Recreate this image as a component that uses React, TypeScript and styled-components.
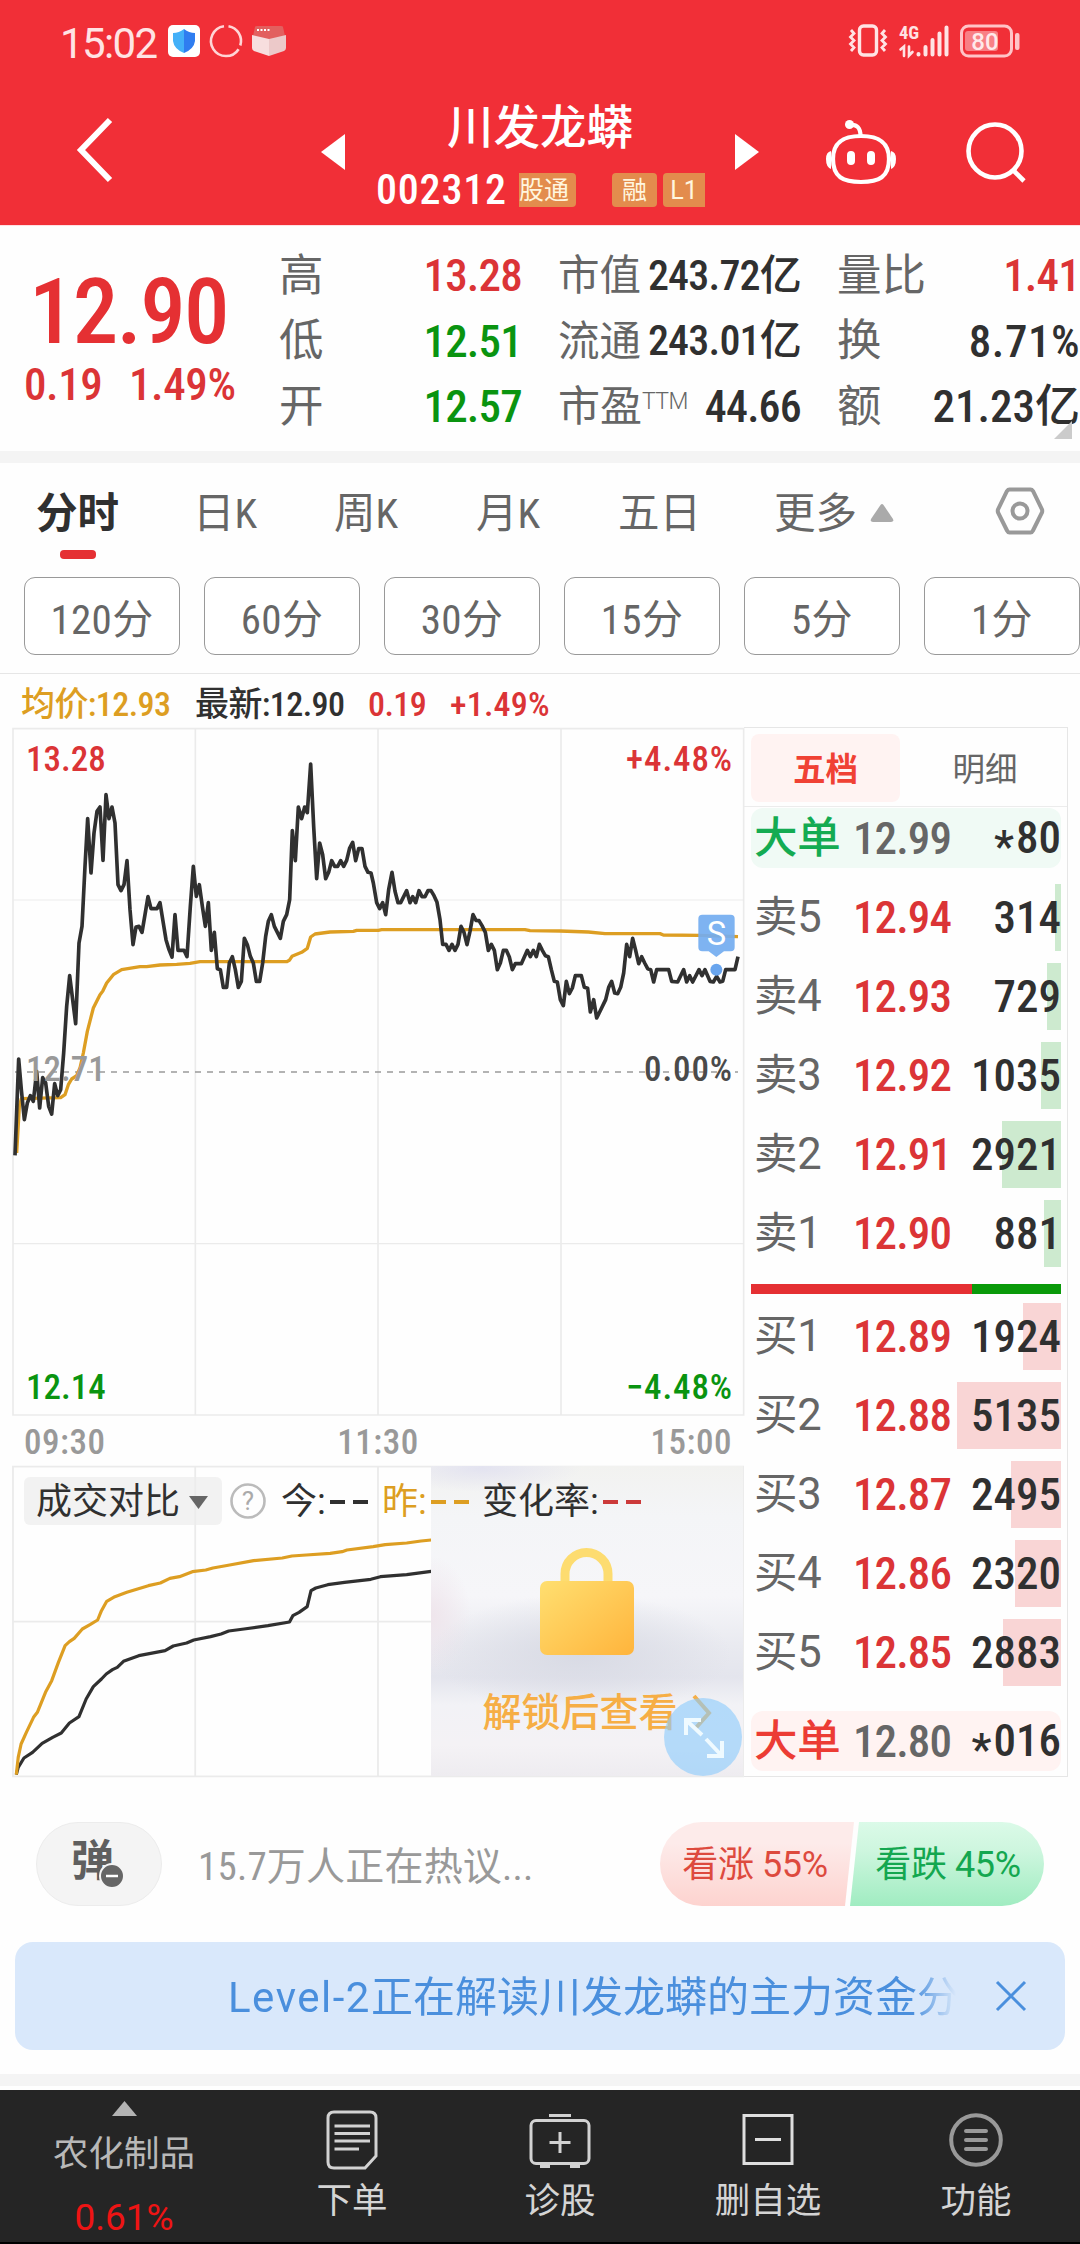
import React from 'react';
import styled, { createGlobalStyle, css } from 'styled-components';

const RED = '#db3436';
const GREEN = '#0a9410';
const INK = '#303030';
const GREY = '#666666';
const GOLD = '#dd9e22';

const num = css`
  font-family: 'Roboto Condensed', Roboto, 'Noto Sans CJK SC', sans-serif;
`;

const GlobalStyle = createGlobalStyle`
  * { box-sizing: border-box; }
  body {
    margin: 0;
    background: #fefefe;
    font-family: Roboto, 'Noto Sans CJK SC', sans-serif;
    color: ${INK};
  }
  svg { display: block; flex: none; overflow: visible; }
`;

const Screen = styled.main`
  width: 1080px;
  height: 2244px;
  overflow: hidden;
  display: flex;
  flex-direction: column;
  line-height: 1;
  white-space: nowrap;
`;

/* ---------- header ---------- */
const Header = styled.header`
  height: 225px;
  flex: none;
  background: #f12f37;
  color: #fff;
`;
const StatusBar = styled.div`
  height: 82px;
  padding: 0 60px 0 60px;
  display: flex;
  align-items: center;
`;
const Clock = styled.span`
  width: 108px;
  font-size: 42px;
  color: #ffe3e4;
  letter-spacing: -1.6px;
  padding-top: 5px;
`;
const StatusIcons = styled.div<{ $gap: number }>`
  display: flex;
  align-items: center;
  gap: ${p => p.$gap}px;
`;
const Spacer = styled.div`
  flex: 1;
`;
const TitleBar = styled.div`
  height: 140px;
  padding-left: 77px;
  display: flex;
  align-items: center;
`;
const IconButton = styled.div<{ $before: number }>`
  margin-left: ${p => p.$before}px;
`;
const TitleBlock = styled.div`
  width: 390px;
  height: 140px;
  padding-top: 23px;
`;
const StockName = styled.h1`
  margin: 0 0 22px;
  height: 46px;
  line-height: 46px;
  font-size: 46.5px;
  font-weight: 500;
  text-align: center;
`;
const CodeRow = styled.div`
  height: 34px;
  padding-left: 31px;
  display: flex;
  align-items: center;
`;
const Code = styled.span`
  ${num}
  width: 143px;
  font-size: 42px;
  font-weight: 500;
  letter-spacing: 0.8px;
`;
const Tag = styled.span<{ $w: number; $r: string; $after?: number; $align?: string }>`
  width: ${p => p.$w}px;
  height: 34px;
  line-height: 35px;
  margin-right: ${p => p.$after ?? 0}px;
  border-radius: ${p => p.$r};
  background: #e38c4d;
  color: #fff6df;
  font-size: 25px;
  text-align: ${p => p.$align ?? 'center'};
`;

/* ---------- quote summary ---------- */
const Quote = styled.section`
  position: relative;
  height: 226px;
  flex: none;
  display: flex;
  border-top: 1px solid #ffdfe2;
`;
const PriceBlock = styled.div`
  width: 279px;
  padding-top: 40px;
  ${num}
  color: ${RED};
`;
const BigPrice = styled.div`
  height: 92px;
  line-height: 92px;
  padding-left: 29px;
  font-size: 91px;
  font-weight: 500;
  letter-spacing: -1.7px;
  color: #e53033;
`;
const ChangeRow = styled.div`
  margin-top: 4px;
  height: 46px;
  line-height: 46px;
  display: flex;
  padding-left: 24px;
  font-size: 45px;
  font-weight: 500;
`;
const Change = styled.span<{ $w?: number }>`
  width: ${p => (p.$w ? p.$w + 'px' : 'auto')};
  letter-spacing: -0.4px;
`;
const Stats = styled.div`
  padding-top: 17px;
  display: grid;
  grid-template-columns: repeat(3, 243px);
  grid-template-rows: repeat(3, 65.5px);
  column-gap: 36px;
`;
const Stat = styled.div`
  display: flex;
  align-items: center;
  justify-content: space-between;
`;
const StatLabel = styled.span<{ $size: number }>`
  display: flex;
  font-size: ${p => p.$size}px;
  color: ${GREY};
`;
const Sup = styled.sup`
  font-size: 23px;
  line-height: 23px;
  font-weight: 300;
  vertical-align: baseline;
  padding-top: 4px;
  letter-spacing: -0.6px;
`;
const StatValue = styled.span<{ $size: number; $color: string; $ls?: number }>`
  ${num}
  font-size: ${p => p.$size}px;
  font-weight: 500;
  letter-spacing: ${p => p.$ls ?? -0.8}px;
  color: ${p => p.$color};
`;
const Corner = styled.i`
  position: absolute;
  right: 8px;
  bottom: 12px;
  border-style: solid;
  border-width: 0 0 18px 18px;
  border-color: transparent transparent #cbcbcb transparent;
`;
const Band = styled.div<{ $after?: number }>`
  height: 12px;
  flex: none;
  margin-bottom: ${p => p.$after ?? 0}px;
  background: #f4f4f4;
`;

/* ---------- period tabs ---------- */
const Tabs = styled.nav`
  height: 114px;
  flex: none;
  display: flex;
  align-items: flex-start;
  padding-top: 24px;
`;
const Tab = styled.div<{ $w: number; $active?: boolean; $before?: number }>`
  ${num}
  width: ${p => p.$w}px;
  margin-left: ${p => p.$before ?? 0}px;
  padding-top: 6px;
  display: flex;
  flex-direction: column;
  font-size: 41.5px;
  line-height: 42px;
  font-weight: ${p => (p.$active ? 700 : 400)};
  color: ${p => (p.$active ? INK : GREY)};
`;
const Underline = styled.i`
  width: 36px;
  height: 9px;
  margin: 15px 0 0 24px;
  border-radius: 4px;
  background: #e53033;
`;
const MoreLabel = styled.span`
  display: flex;
  align-items: center;
  gap: 13px;
`;
const Periods = styled.div`
  height: 97px;
  flex: none;
  display: flex;
  gap: 24px;
  padding-left: 24px;
  border-bottom: 1.5px solid #e6e6e6;
`;
const Period = styled.button`
  ${num}
  width: 156px;
  height: 78px;
  flex: none;
  padding: 0 0 1px;
  border: 1.5px solid #999;
  border-radius: 11px;
  background: #fff;
  color: ${GREY};
  font-size: 41px;
  letter-spacing: 0.3px;
`;

/* ---------- chart area ---------- */
const Legend = styled.div`
  ${num}
  height: 53px;
  flex: none;
  display: flex;
  align-items: center;
  padding: 7px 0 0 21px;
  font-size: 34px;
  font-weight: 500;
`;
const LegendItem = styled.span<{ $w: number; $color: string; $ls?: number }>`
  width: ${p => p.$w}px;
  color: ${p => p.$color};
  letter-spacing: ${p => p.$ls ?? -0.6}px;
`;
const Board = styled.section`
  height: 1050px;
  flex: none;
  display: flex;
  padding-left: 12px;
`;
const Charts = styled.div`
  width: 732px;
  padding-top: 1px;
`;
const PriceChart = styled.div`
  position: relative;
  height: 688px;
`;
const ChartLabel = styled.span<{ $color: string; $top: number; $right?: boolean }>`
  ${num}
  position: absolute;
  top: ${p => p.$top}px;
  ${p => (p.$right ? 'right: 11px; letter-spacing: 0.9px;' : 'left: 14px;')}
  font-size: 35px;
  font-weight: 500;
  color: ${p => p.$color};
`;
const Times = styled.div`
  ${num}
  height: 50px;
  display: flex;
  align-items: center;
  justify-content: space-between;
  padding: 2px 12px 0 12px;
  font-size: 35px;
  font-weight: 500;
  letter-spacing: 0.5px;
  color: #999;
`;
const CompareChart = styled.div`
  position: relative;
  height: 311px;
`;
const Locked = styled.div`
  position: absolute;
  top: 0;
  right: 1px;
  width: 312px;
  height: 310px;
  padding-top: 82px;
  display: flex;
  flex-direction: column;
  align-items: center;
  background:
    radial-gradient(ellipse 100px 24px at 50px 2px, #e3e3f0 0%, rgba(227, 227, 240, 0) 100%),
    radial-gradient(ellipse 150px 60px at 150px 188px, #d8dae4 0%, rgba(216, 218, 228, 0) 100%),
    radial-gradient(ellipse 40px 60px at 0 150px, #efe5ec 0%, rgba(239, 229, 236, 0) 100%),
    linear-gradient(#f2f2f0 0, #f4f5f7 16%, #f6f6f9 42%, #e9eaf0 58%, #e4e5ed 68%, #f2f2f6 77%, #f4f2f5 90%, #eeecf0 100%);
`;
const Unlock = styled.div`
  margin: 38px 0 0 20px;
  display: flex;
  align-items: center;
  gap: 14px;
  font-size: 39px;
  font-weight: 500;
  color: #f6ae45;
`;
const CompareBar = styled.div`
  ${num}
  position: absolute;
  left: 12px;
  top: 11px;
  height: 48px;
  display: flex;
  align-items: center;
  font-size: 36px;
`;
const Selector = styled.div`
  width: 198px;
  height: 48px;
  margin-right: 8px;
  padding: 2px 0 0 12px;
  display: flex;
  align-items: center;
  gap: 9px;
  border-radius: 6px;
  background: rgba(236, 236, 236, 0.7);
`;
const CompareItem = styled.span<{ $w: number; $color?: string; $before?: number }>`
  width: ${p => p.$w}px;
  margin-left: ${p => p.$before ?? 0}px;
  padding-top: 2px;
  display: flex;
  align-items: center;
  color: ${p => p.$color ?? INK};
`;
const Dashes = styled.i<{ $color: string }>`
  width: 38px;
  height: 4px;
  margin: 0 0 0 5px;
  background: linear-gradient(90deg, ${p => p.$color} 15px, transparent 15px, transparent 23px, ${p => p.$color} 23px);
`;
const Expand = styled.div`
  position: absolute;
  right: 2px;
  bottom: 1px;
`;

/* ---------- order book ---------- */
const Book = styled.aside`
  width: 324px;
  border: 1px solid #e6e6e6;
  border-width: 1.5px 1.5px 1.5px 0;
  padding: 0 6px 0 7px;
`;
const BookTabs = styled.div`
  height: 79px;
  margin: 0 -6px 1px -7px;
  padding: 6px 0 0 7px;
  display: flex;
  border-bottom: 1.5px solid #ececec;
`;
const BookTab = styled.div<{ $active?: boolean }>`
  width: ${p => (p.$active ? 149 : 170)}px;
  flex: none;
  height: 68px;
  line-height: 72px;
  border-radius: 8px;
  text-align: center;
  font-size: 32.5px;
  font-weight: ${p => (p.$active ? 700 : 400)};
  color: ${p => (p.$active ? '#f04134' : GREY)};
  background: ${p => (p.$active ? '#fff3f2' : 'transparent')};
`;
const Row = styled.div<{ $bg?: string; $bar?: number; $barColor?: string; $h: number; $after: number }>`
  height: ${p => p.$h}px;
  margin-bottom: ${p => p.$after}px;
  display: grid;
  grid-template-columns: 99px 97px 1fr;
  align-items: center;
  padding-left: 3px;
  border-radius: ${p => (p.$bg ? 12 : 0)}px;
  background: ${p => p.$bg ?? `linear-gradient(${p.$barColor}, ${p.$barColor}) right / ${p.$bar}px 100% no-repeat`};
`;
const Level = styled.span<{ $color?: string }>`
  font-size: 43.5px;
  letter-spacing: -0.3px;
  padding-top: 1px;
  font-weight: ${p => (p.$color ? 500 : 400)};
  color: ${p => p.$color ?? GREY};
`;
const Price = styled.span<{ $color: string }>`
  ${num}
  font-size: 45px;
  font-weight: 500;
  letter-spacing: -0.9px;
  color: ${p => p.$color};
`;
const Volume = styled.span`
  ${num}
  font-size: 45px;
  font-weight: 500;
  text-align: right;
`;
const Star = styled.span`
  display: inline-block;
  line-height: 30px;
  vertical-align: -9px;
  margin-right: 2px;
`;
const Ratio = styled.div`
  height: 10px;
  margin: 17px 0 9px;
  background: linear-gradient(90deg, #e53033 221px, #0a9a0a 221px);
`;

/* ---------- discussion ---------- */
const Discuss = styled.section`
  height: 165px;
  flex: none;
  padding: 45px 36px 0;
  display: flex;
`;
const Barrage = styled.div`
  position: relative;
  width: 126px;
  height: 84px;
  flex: none;
  line-height: 77px;
  padding-left: 34px;
  border: 1px solid #ececec;
  border-radius: 42px;
  background: #f4f4f4;
  font-size: 43px;
  font-weight: 700;
  color: #5f5f5f;
`;
const BarrageBadge = styled.div`
  position: absolute;
  left: 62px;
  top: 40px;
`;
const Topic = styled.span`
  ${num}
  flex: 0 0 498px;
  padding-left: 36px;
  line-height: 90px;
  font-size: 39px;
  letter-spacing: 0.2px;
  color: #999;
`;
const Vote = styled.div<{ $up?: boolean }>`
  width: 194px;
  flex: none;
  height: 84px;
  line-height: 86px;
  text-align: center;
  margin-left: ${p => (p.$up ? 0 : -4)}px;
  padding-right: ${p => (p.$up ? 4 : 0)}px;
  padding-left: ${p => (p.$up ? 0 : 2)}px;
  font-size: 36px;
  letter-spacing: -0.4px;
  color: ${p => (p.$up ? '#dd4a3e' : '#14a750')};
  border-radius: ${p => (p.$up ? '42px 0 0 42px' : '0 42px 42px 0')};
  background: ${p => (p.$up ? 'linear-gradient(#fdebea, #fdebea 25%, #fdd3cf)' : 'linear-gradient(#dbfae8, #cdf6de 35%, #a0ecc1)')};
  clip-path: ${p => (p.$up ? 'polygon(0 0, 100% 0, 185px 100%, 0 100%)' : 'polygon(9px 0, 100% 0, 100% 100%, 0 100%)')};
`;
const Banner = styled.section`
  height: 108px;
  flex: none;
  margin: 0 15px 24px;
  padding-left: 213px;
  display: flex;
  align-items: center;
  border-radius: 18px;
  background: #d9e8fb;
  color: #4a8fdd;
`;
const BannerText = styled.span`
  width: 728px;
  margin-right: 40px;
  padding-top: 3px;
  overflow: hidden;
  line-height: 60px;
  font-size: 42px;
  mask-image: linear-gradient(90deg, #000 685px, transparent 728px);
`;
const Latin = styled.span`
  letter-spacing: 1.5px;
`;

/* ---------- bottom navigation ---------- */
const Nav = styled.nav`
  height: 154px;
  flex: none;
  display: grid;
  grid-template-columns: 248px repeat(4, 208px);
  background: #252525;
  border-bottom: 2px solid #000;
  color: #d4d4d4;
`;
const NavItem = styled.div`
  display: flex;
  flex-direction: column;
  align-items: center;
  padding-top: 20px;
  font-size: 35.5px;
`;
const NavIcon = styled.div`
  height: 74px;
`;
const Sector = styled.div`
  display: flex;
  flex-direction: column;
  align-items: center;
  padding-top: 11px;
  font-size: 35.5px;
  color: #b8b8b8;
`;
const SectorName = styled.span`
  margin-top: 21px;
`;
const SectorChange = styled.span`
  margin-top: 26px;
  font-size: 37px;
  color: #ee1414;
`;

/* ---------- data ---------- */
const PRICE =
  '45,1307 56,1018 64,1110 73,1200 82,1150 91,1128 100,1145 110,1055 119,1165 128,1074 137,1090 146,1160 155,1183 164,1092 173,1128 182,1110 191,1000 200,860 209,768 218,840 227,912 237,670 246,620 255,440 263,297 273,460 282,340 291,275 300,262 309,422 318,225 327,297 336,262 345,310 354,495 363,513 372,495 381,423 390,570 399,675 408,622 417,620 426,638 435,585 444,531 453,567 471,567 480,549 489,605 498,660 507,690 516,712 525,585 534,692 552,692 561,711 571,560 580,440 589,530 598,495 607,560 616,620 625,549 634,692 643,638 652,747 661,750 670,803 680,803 688,730 697,711 706,750 715,803 724,785 733,656 742,675 751,710 760,730 769,785 779,785 788,730 797,650 805,605 814,585 823,620 832,638 841,656 850,605 860,585 869,540 877,333 886,423 895,262 905,297 914,262 922,279 932,133 941,320 950,477 959,370 968,405 977,477 986,458 995,423 1004,440 1013,440 1022,423 1031,440 1040,422 1049,385 1058,368 1067,423 1076,387 1086,387 1095,440 1104,458 1113,460 1120,490 1130,549 1139,567 1148,549 1157,585 1166,510 1176,458 1185,515 1194,549 1202,549 1211,531 1220,513 1230,549 1238,531 1247,549 1257,513 1266,531 1275,531 1284,513 1293,513 1302,528 1311,548 1320,600 1328,674 1338,674 1347,692 1356,674 1365,692 1374,674 1383,620 1392,638 1401,675 1410,635 1419,585 1428,602 1437,603 1446,618 1456,638 1465,692 1474,674 1483,692 1492,750 1501,730 1510,692 1519,692 1528,712 1537,750 1546,732 1564,732 1573,712 1582,692 1591,711 1600,692 1609,711 1618,674 1627,692 1636,708 1645,711 1654,750 1663,785 1672,787 1681,840 1690,858 1699,785 1708,822 1717,805 1726,768 1744,768 1753,803 1763,806 1771,877 1781,840 1790,895 1799,877 1817,840 1826,803 1835,785 1844,820 1853,822 1862,803 1871,760 1880,674 1889,711 1898,656 1907,692 1916,732 1925,711 1934,730 1943,747 1952,750 1961,787 1970,750 2006,750 2015,785 2033,787 2042,768 2051,750 2060,787 2069,768 2078,787 2097,750 2106,768 2115,750 2130,785 2140,787 2150,770 2160,787 2168,785 2177,750 2205,750 2214,711';
const AVERAGE =
  '50,1300 58,1160 64,1137 182,1134 195,1125 205,1095 215,1078 230,1068 240,1045 250,1000 262,935 280,865 300,825 308,815 320,790 340,765 365,750 420,741 440,741 480,736 530,734 570,731 600,726 860,726 868,722 876,710 905,698 922,686 932,652 945,643 990,637 1060,635 1070,632 1135,632 1145,630 1575,630 1590,633 1680,634 1765,637 1815,642 1980,642 1990,646 2100,647 2214,651';
const YESTERDAY =
  '34,1272 38,1220 44,1180 55,1145 70,1100 78,1085 95,1025 108,990 122,935 136,885 145,873 155,863 172,835 188,822 204,808 212,780 223,752 240,738 265,725 310,705 335,697 355,683 375,678 402,663 430,658 445,652 480,643 530,630 590,622 610,616 640,613 690,608 715,603 725,598 780,588 805,582 850,577 880,571 901,568';
const TODAY =
  '34,1272 38,1250 50,1222 68,1205 88,1178 110,1160 128,1147 145,1117 165,1098 180,1045 195,1008 212,985 222,970 235,957 245,950 258,932 290,915 345,900 362,886 390,877 405,868 440,858 462,850 478,841 510,835 560,825 605,814 612,795 625,785 642,768 650,720 660,712 685,702 720,695 775,686 795,678 850,672 901,662';

const STATS: { label: string; sup?: string; value: string; color: string; ls: number; vs: number; sp?: number }[] = [
  { label: '高', value: '13.28', color: RED, ls: 44.5, vs: 45 },
  { label: '市值', value: '243.72亿', color: INK, ls: 41.5, vs: 42 },
  { label: '量比', value: '1.41', color: RED, ls: 44.5, vs: 45 },
  { label: '低', value: '12.51', color: GREEN, ls: 44.5, vs: 45 },
  { label: '流通', value: '243.01亿', color: INK, ls: 41.5, vs: 42 },
  { label: '换', value: '8.71%', color: INK, ls: 44.5, vs: 45, sp: 0.5 },
  { label: '开', value: '12.57', color: GREEN, ls: 44.5, vs: 45 },
  { label: '市盈', sup: 'TTM', value: '44.66', color: INK, ls: 42, vs: 44 },
  { label: '额', value: '21.23亿', color: INK, ls: 44.5, vs: 45, sp: 0 },
];
const ASKS: [string, string, string, number][] = [
  ['卖5', '12.94', '314', 6],
  ['卖4', '12.93', '729', 14],
  ['卖3', '12.92', '1035', 20],
  ['卖2', '12.91', '2921', 59],
  ['卖1', '12.90', '881', 17],
];
const BIDS: [string, string, string, number][] = [
  ['买1', '12.89', '1924', 38],
  ['买2', '12.88', '5135', 104],
  ['买3', '12.87', '2495', 50],
  ['买4', '12.86', '2320', 46],
  ['买5', '12.85', '2883', 58],
];

/* ---------- icons ---------- */
const ShieldIcon = () => (
  <svg width="32" height="32" viewBox="0 0 32 32">
    <rect width="32" height="32" rx="5" fill="#fff" />
    <path d="M16 4 Q21 8 27 8 V16 Q26 24 16 28 Z" fill="#2f7df0" />
    <path d="M16 4 Q11 8 5 8 V16 Q6 24 16 28 Z" fill="#43b0f8" />
  </svg>
);
const RingIcon = () => (
  <svg width="32" height="32" viewBox="0 0 32 32" fill="none" stroke="#ffd5d6" strokeWidth="2.6">
    <path d="M18.5 1.200 A15 15 0 0 1 30.300 20.500 M28.600 24.200 A15 15 0 1 1 14 1.200" />
  </svg>
);
const BoxIcon = () => (
  <svg width="34" height="32" viewBox="0 0 34 32">
    <path d="M3 2 Q3 1 5 1 H29 Q31 1 31 2 L33 11 L17 15 L1 11 Z" fill="#e2605f" />
    <path d="M0 10 L17 14 V31 L2 26 Q0 25 0 23 Z" fill="#f7dede" />
    <path d="M34 10 L17 14 V31 L32 26 Q34 25 34 23 Z" fill="#ecc9c9" />
    <path d="M5 5 h2 m1.5 0 h2 m1.5 0 h2 m1.5 0 h2" stroke="#fff" strokeWidth="2" />
  </svg>
);
const VibrateIcon = () => (
  <svg width="40" height="34" viewBox="0 0 40 34" fill="none" stroke="#ffe3e4" strokeWidth="3.4">
    <rect x="11.5" y="2" width="17" height="29" rx="4" />
    <path d="M3 6 L6 9.5 L2.5 13 L6 16.5 L2.5 20 L6 23.5 L3 27 M37 6 L34 9.5 L37.500 13 L34 16.500 L37.500 20 L34 23.500 L37 27" strokeWidth="2.8" />
  </svg>
);
const SignalIcon = () => (
  <svg width="50" height="34" viewBox="0 0 50 34">
    <text x="0" y="15" fontFamily="Roboto Condensed" fontSize="18.500" fontWeight="700" fill="#ffe3e4">4G</text>
    <g stroke="#ffe3e4" strokeWidth="4" strokeLinecap="round">
      <path d="M19.500 30 V30.500 M26.500 23 V30.500 M33.500 16 V30.500 M40.500 9.500 V30.500 M47.500 3.500 V30.500" />
      <path d="M1.500 25.500 L5 22.500 V32 M10 22.500 V31.500 L13.500 28" strokeWidth="2.600" fill="none" />
    </g>
  </svg>
);
const BatteryIcon = () => (
  <svg width="60" height="34" viewBox="0 0 60 34">
    <rect x="1.500" y="2" width="50" height="30" rx="7" fill="none" stroke="#ffc4c7" strokeWidth="3" />
    <rect x="5" y="7" width="33" height="20" rx="3" fill="#f88085" />
    <rect x="55" y="9" width="4.500" height="17" rx="2" fill="#ffc4c7" />
    <text x="25" y="25.500" textAnchor="middle" fontFamily="Roboto" fontSize="24" fontWeight="500" fill="#ffe9ea">80</text>
  </svg>
);
const BackIcon = () => (
  <svg width="35" height="66" viewBox="0 0 35 66" fill="none" stroke="#fff" strokeWidth="6">
    <path d="M33 1 L4 31 L33 61" />
  </svg>
);
const Triangle = ({ w, h, d, fill }: { w: number; h: number; d: string; fill: string }) => (
  <svg width={w} height={h} viewBox={`0 0 ${w} ${h}`}>
    <path d={d} fill={fill} />
  </svg>
);
const RobotIcon = () => (
  <svg width="70" height="64" viewBox="0 0 70 64" fill="none" stroke="#fff" strokeWidth="4.200">
    <path d="M35 16 C50 16 63 20 63 39 C63 57 53 62 35 62 C17 62 7 57 7 39 C7 20 20 16 35 16 Z" />
    <path d="M24 5 C31 4 34.500 8 34.500 16" />
    <circle cx="23.500" cy="4.500" r="4.500" fill="#fff" stroke="none" />
    <path d="M25 35 V41 M45 35 V41" strokeWidth="8" strokeLinecap="round" />
    <path d="M5 31 Q0 32 0 39 Q0 47 5 49 Z M65 31 Q70 32 70 39 Q70 47 65 49 Z" fill="#fff" stroke="none" />
  </svg>
);
const SearchIcon = () => (
  <svg width="62" height="64" viewBox="0 0 62 64" fill="none" stroke="#fff" strokeWidth="4.600">
    <circle cx="29" cy="31" r="26.500" />
    <path d="M47 50 L58 61" />
  </svg>
);
const SettingsIcon = () => (
  <svg width="50" height="48" viewBox="0 0 50 48" fill="none" stroke="#999" strokeWidth="4">
    <path d="M14.500 2.500 H35.500 Q37 2.500 38 4 L47 22.500 Q47.500 24 47 25.500 L38 43.500 Q37 45.500 35.500 45.500 H14.500 Q13 45.500 12 43.500 L3 25.500 Q2.500 24 3 22.500 L12 4 Q13 2.500 14.500 2.500 Z" />
    <circle cx="25" cy="24" r="7.500" />
  </svg>
);
const HelpIcon = () => (
  <svg width="36" height="36" viewBox="0 0 36 36">
    <circle cx="18" cy="18" r="16.500" fill="none" stroke="#bbb" strokeWidth="2.600" />
    <text x="18" y="27" textAnchor="middle" fontFamily="Roboto" fontSize="26" fill="#aaa">?</text>
  </svg>
);
const LockIcon = () => (
  <svg width="96" height="108" viewBox="0 0 96 108">
    <defs>
      <linearGradient id="gold" x1="0" y1="0" x2="1" y2="1">
        <stop offset="0" stopColor="#ffdf70" />
        <stop offset="1" stopColor="#ffb43c" />
      </linearGradient>
    </defs>
    <path d="M26 40 V26 A21.500 21.500 0 0 1 69 26 V40" fill="none" stroke="#fddc70" strokeWidth="9" />
    <rect x="1" y="33" width="94" height="74" rx="7" fill="url(#gold)" />
  </svg>
);
const ExpandIcon = () => (
  <svg width="78" height="78" viewBox="0 0 78 78">
    <circle cx="39" cy="39" r="39" fill="#8ccbfb" fillOpacity="0.62" />
    <path d="M22 37 V22 H37 M22 22 L38 37 M42 41 L58 58 M58 43 V58 H43" fill="none" stroke="#effaff" strokeWidth="4" />
  </svg>
);
const OrderIcon = () => (
  <svg width="52" height="60" viewBox="0 0 52 60" fill="none" stroke="#d2d2d2" strokeWidth="3">
    <path d="M8 2 H44 Q50 2 50 8 V46 L39 58 H8 Q2 58 2 52 V8 Q2 2 8 2 Z" />
    <path d="M8.500 16 H44 M8.500 23.500 H44 M8.500 31 H44 M8.500 39 H33" />
  </svg>
);
const DiagnoseIcon = () => (
  <svg width="62" height="60" viewBox="0 0 62 60" fill="none" stroke="#d2d2d2" strokeWidth="3">
    <rect x="2" y="10.500" width="58" height="43" rx="5" />
    <path d="M20 5.500 H42 M31 22 V43 M20.500 32.500 H41.500" />
    <path d="M11 56 H21 M41 56 H51" strokeWidth="4" />
  </svg>
);
const RemoveIcon = () => (
  <svg width="52" height="60" viewBox="0 0 52 60" fill="none" stroke="#dedede" strokeWidth="3">
    <rect x="2" y="5.500" width="48" height="48" />
    <path d="M13 29.500 H39" />
  </svg>
);
const MenuIcon = () => (
  <svg width="54" height="60" viewBox="0 0 54 60" fill="none" stroke="#999" strokeWidth="4">
    <circle cx="27" cy="30" r="24.800" />
    <path d="M17 21 H37 M17 30 H37 M17 39 H37" strokeLinecap="round" />
  </svg>
);

function PriceSvg() {
  return (
    <svg width="732" height="688" viewBox="36 25 2196 2064">
      <g fill="none" stroke="#ebebeb" strokeWidth="5">
        <path d="M39 27 H2231 V2086 H39 Z M586 27 V2086 M1134 27 V2086 M1683 27 V2086" />
        <path d="M39 541 H2231 M39 1572 H2231" strokeWidth="3.500" />
      </g>
      <path d="M45 1057 H2214" stroke="#9a9a9a" strokeWidth="4" strokeDasharray="18 18" />
      <polyline points={AVERAGE} fill="none" stroke={GOLD} strokeWidth="10" strokeLinejoin="round" />
      <polyline points={PRICE} fill="none" stroke={INK} strokeWidth="11" strokeLinejoin="round" />
      <path d="M2107 585 H2192 Q2204 585 2204 597 V683 Q2204 695 2192 695 H2172 L2149 712 L2126 695 H2107 Q2095 695 2095 683 V597 Q2095 585 2107 585 Z" fill="#73acf0" opacity="0.92" />
      <text x="2149" y="676" textAnchor="middle" fontFamily="Roboto" fontSize="98" fill="#fff">S</text>
      <circle cx="2149" cy="750" r="18" fill="#69a5ee" />
    </svg>
  );
}

function CompareSvg() {
  return (
    <svg width="732" height="311" viewBox="25 346 1530 933" preserveAspectRatio="none">
      <g fill="none" stroke="#ebebeb" strokeWidth="1.800">
        <path vectorEffect="non-scaling-stroke" d="M27 348 H1553 V1277 H27 Z M408 348 V1277 M790 348 V1277 M27 813 H1553" />
      </g>
      <polyline vectorEffect="non-scaling-stroke" points={TODAY} fill="none" stroke={INK} strokeWidth="3.2" strokeLinejoin="round" />
      <polyline vectorEffect="non-scaling-stroke" points={YESTERDAY} fill="none" stroke={GOLD} strokeWidth="3.2" strokeLinejoin="round" />
    </svg>
  );
}

function Masked({ digits }: { digits: string }) {
  return (
    <Volume>
      <Star>*</Star>
      {digits}
    </Volume>
  );
}

export default function App() {
  return (
    <>
      <GlobalStyle />
      <Screen>
        <Header>
          <StatusBar>
            <Clock>15:02</Clock>
            <StatusIcons $gap={10}>
              <ShieldIcon />
              <RingIcon />
              <BoxIcon />
            </StatusIcons>
            <Spacer />
            <StatusIcons $gap={11}>
              <VibrateIcon />
              <SignalIcon />
              <BatteryIcon />
            </StatusIcons>
          </StatusBar>
          <TitleBar>
            <BackIcon />
            <IconButton $before={209}>
              <Triangle w={24} h={36} d="M24 0 V36 L0 18 Z" fill="#fff" />
            </IconButton>
            <TitleBlock>
              <StockName>川发龙蟒</StockName>
              <CodeRow>
                <Code>002312</Code>
                <Tag $w={57} $r="0 4px 4px 0" $after={36} $align="left">股通</Tag>
                <Tag $w={45} $r="4px" $after={6}>融</Tag>
                <Tag $w={42} $r="4px 0 0 4px">L1</Tag>
              </CodeRow>
            </TitleBlock>
            <Triangle w={24} h={36} d="M0 0 V36 L24 18 Z" fill="#fff" />
            <IconButton $before={67}>
              <RobotIcon />
            </IconButton>
            <IconButton $before={70}>
              <SearchIcon />
            </IconButton>
          </TitleBar>
        </Header>

        <Quote>
          <PriceBlock>
            <BigPrice>12.90</BigPrice>
            <ChangeRow>
              <Change $w={105}>0.19</Change>
              <Change>1.49%</Change>
            </ChangeRow>
          </PriceBlock>
          <Stats>
            {STATS.map(s => (
              <Stat key={s.label}>
                <StatLabel $size={s.ls}>
                  {s.label}
                  {s.sup && <Sup>{s.sup}</Sup>}
                </StatLabel>
                <StatValue $size={s.vs} $color={s.color} $ls={s.sp}>{s.value}</StatValue>
              </Stat>
            ))}
          </Stats>
          <Corner />
        </Quote>
        <Band />

        <Tabs>
          <Tab $w={157} $before={36} $active>
            分时
            <Underline />
          </Tab>
          <Tab $w={141}>日K</Tab>
          <Tab $w={142}>周K</Tab>
          <Tab $w={142}>月K</Tab>
          <Tab $w={156}>五日</Tab>
          <Tab $w={221}>
            <MoreLabel>
              更多
              <Triangle w={24} h={20} d="M10.500 1 Q12 -1 13.500 1 L23 15 Q24 18 21 18 H3 Q0 18 1 15 Z" fill="#aaa" />
            </MoreLabel>
          </Tab>
          <SettingsIcon />
        </Tabs>
        <Periods>
          {['120分', '60分', '30分', '15分', '5分', '1分'].map(p => (
            <Period key={p}>{p}</Period>
          ))}
        </Periods>

        <Legend>
          <LegendItem $w={174} $color={GOLD}>均价:12.93</LegendItem>
          <LegendItem $w={173} $color={INK}>最新:12.90</LegendItem>
          <LegendItem $w={82} $color={RED}>0.19</LegendItem>
          <LegendItem $w={110} $color={RED} $ls={0.2}>+1.49%</LegendItem>
        </Legend>

        <Board>
          <Charts>
            <PriceChart>
              <ChartLabel $top={324} $color="#999">12.71</ChartLabel>
              <PriceSvg />
              <ChartLabel $top={14} $color={RED}>13.28</ChartLabel>
              <ChartLabel $top={14} $color={RED} $right>+4.48%</ChartLabel>
              <ChartLabel $top={324} $color="#4a4a4a" $right>0.00%</ChartLabel>
              <ChartLabel $top={642} $color={GREEN}>12.14</ChartLabel>
              <ChartLabel $top={642} $color={GREEN} $right>−4.48%</ChartLabel>
            </PriceChart>
            <Times>
              <span>09:30</span>
              <span>11:30</span>
              <span>15:00</span>
            </Times>
            <CompareChart>
              <CompareSvg />
              <Locked>
                <LockIcon />
                <Unlock>
                  解锁后查看
                  <svg width="20" height="36" viewBox="0 0 20 36" fill="none" stroke="#f6ae45" strokeWidth="4">
                    <path d="M2 0 L17 17 L2 34" />
                  </svg>
                </Unlock>
              </Locked>
              <CompareBar>
                <Selector>
                  成交对比
                  <Triangle w={19} h={13} d="M0 0 H19 L9.500 13 Z" fill="#666" />
                </Selector>
                <HelpIcon />
                <CompareItem $w={101} $before={15}>
                  今:<Dashes $color={INK} />
                </CompareItem>
                <CompareItem $w={100} $color={GOLD}>
                  昨:<Dashes $color={GOLD} />
                </CompareItem>
                <CompareItem $w={170}>
                  变化率:<Dashes $color="#cc3a3a" />
                </CompareItem>
              </CompareBar>
              <Expand>
                <ExpandIcon />
              </Expand>
            </CompareChart>
          </Charts>

          <Book>
            <BookTabs>
              <BookTab $active>五档</BookTab>
              <BookTab>明细</BookTab>
            </BookTabs>
            <Row $h={60} $after={16} $bg="#f0faf5">
              <Level $color="#14ab52">大单</Level>
              <Price $color={GREY}>12.99</Price>
              <Masked digits="80" />
            </Row>
            {ASKS.map(([level, price, volume, bar], i) => (
              <Row key={level} $h={67} $after={i < 4 ? 12 : 0} $bar={bar} $barColor="#cdeacf">
                <Level>{level}</Level>
                <Price $color={RED}>{price}</Price>
                <Volume>{volume}</Volume>
              </Row>
            ))}
            <Ratio />
            {BIDS.map(([level, price, volume, bar], i) => (
              <Row key={level} $h={67} $after={i < 4 ? 12 : 25} $bar={bar} $barColor="#f9d5d5">
                <Level>{level}</Level>
                <Price $color={RED}>{price}</Price>
                <Volume>{volume}</Volume>
              </Row>
            ))}
            <Row $h={60} $after={0} $bg="#fff3f2">
              <Level $color="#ec3c34">大单</Level>
              <Price $color={GREY}>12.80</Price>
              <Masked digits="016" />
            </Row>
          </Book>
        </Board>

        <Discuss>
          <Barrage>
            弹
            <BarrageBadge>
              <svg width="26" height="26" viewBox="0 0 26 26">
                <circle cx="13" cy="13" r="12" fill="#666" stroke="#f4f4f4" strokeWidth="2" />
                <path d="M7 13 H19" stroke="#fff" strokeWidth="2.500" />
              </svg>
            </BarrageBadge>
          </Barrage>
          <Topic>15.7万人正在热议...</Topic>
          <Vote $up>看涨 55%</Vote>
          <Vote>看跌 45%</Vote>
        </Discuss>

        <Banner>
          <BannerText>
            <Latin>Level-2</Latin>正在解读川发龙蟒的主力资金分
          </BannerText>
          <svg width="30" height="30" viewBox="0 0 30 30" fill="none" stroke="#4a8fdd" strokeWidth="3">
            <path d="M1 1 L29 29 M29 1 L1 29" />
          </svg>
        </Banner>
        <Band $after={4} />

        <Nav>
          <Sector>
            <Triangle w={25} h={15} d="M12.500 0 L25 15 H0 Z" fill="#b3b3b3" />
            <SectorName>农化制品</SectorName>
            <SectorChange>0.61%</SectorChange>
          </Sector>
          <NavItem>
            <NavIcon><OrderIcon /></NavIcon>
            下单
          </NavItem>
          <NavItem>
            <NavIcon><DiagnoseIcon /></NavIcon>
            诊股
          </NavItem>
          <NavItem>
            <NavIcon><RemoveIcon /></NavIcon>
            删自选
          </NavItem>
          <NavItem>
            <NavIcon><MenuIcon /></NavIcon>
            功能
          </NavItem>
        </Nav>
      </Screen>
    </>
  );
}
